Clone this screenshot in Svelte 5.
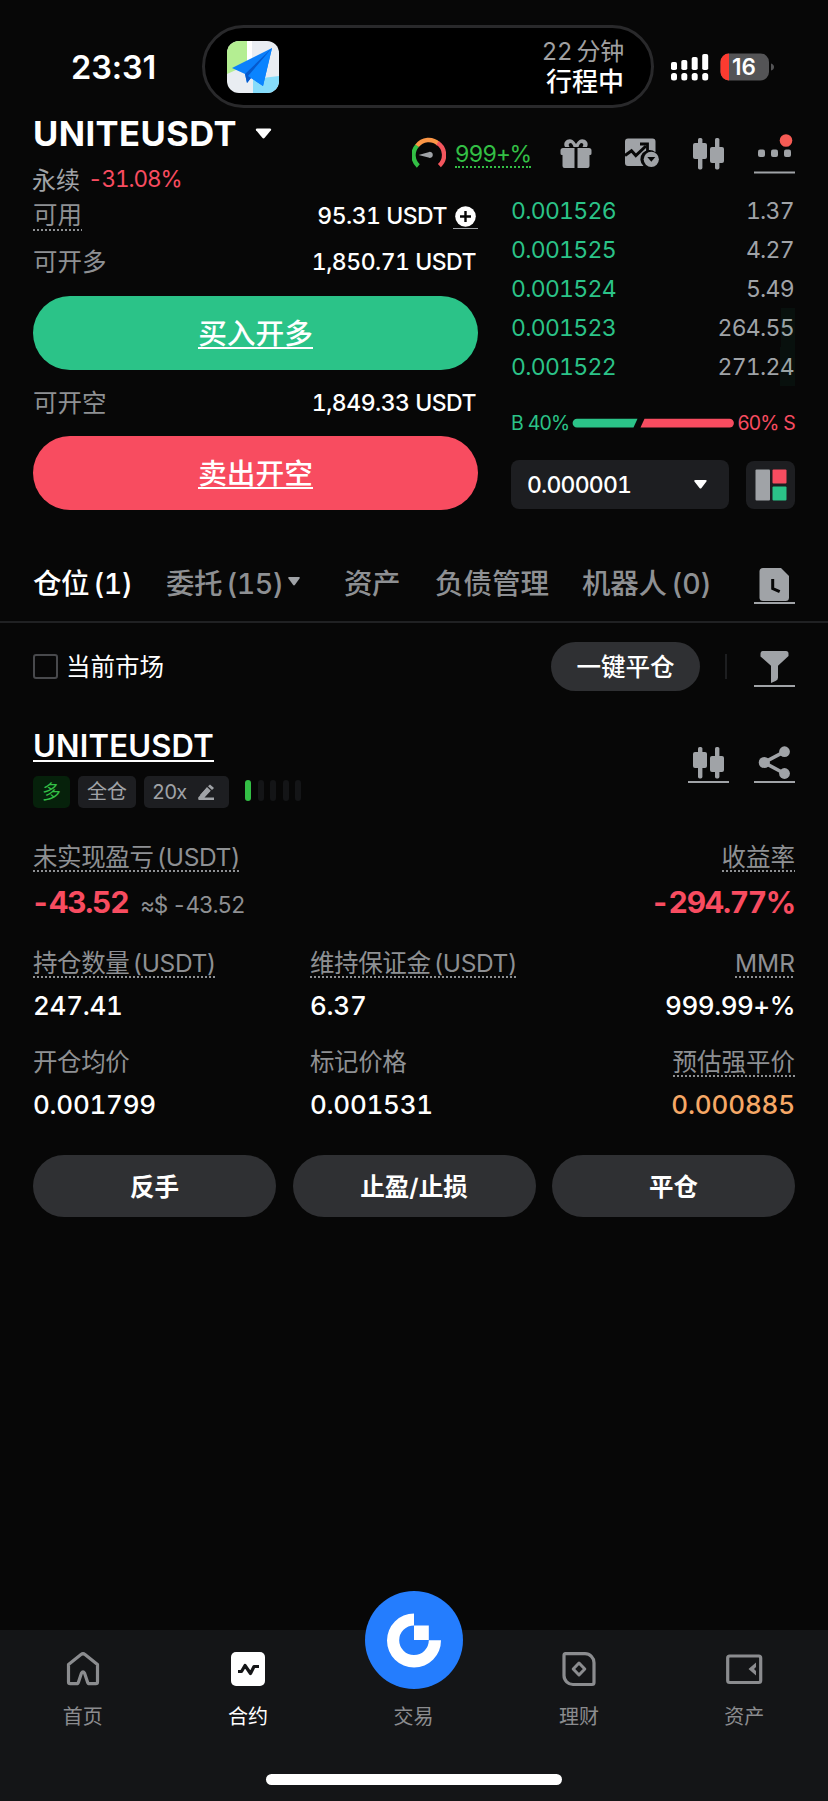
<script>
  const book = [
    { price: '0.001526', size: '1.37', depth: 0 },
    { price: '0.001525', size: '4.27', depth: 0 },
    { price: '0.001524', size: '5.49', depth: 0 },
    { price: '0.001523', size: '264.55', depth: 14 },
    { price: '0.001522', size: '271.24', depth: 15 }
  ];
  const actions = ['反手', '止盈/止损', '平仓'];
</script>

{#snippet candles()}
  <svg class="ico" width="41" height="34" viewBox="0 0 41 34">
    <g fill="#a0a3a7">
      <rect x="5" y="6" width="14" height="16" rx="2" /><rect x="10" y="1" width="4.4" height="31.4" rx="1.6" />
      <rect x="22" y="10" width="14" height="16" rx="2" /><rect x="27" y="1" width="4.4" height="31.4" rx="1.6" />
    </g>
  </svg>
{/snippet}

<div class="screen">
  <div class="status">
    <div class="time">23:31</div>
    <div class="island">
      <svg width="52" height="52" viewBox="0 0 52 52">
        <defs><clipPath id="tile"><rect width="52" height="52" rx="12" /></clipPath></defs>
        <g clip-path="url(#tile)">
          <rect width="52" height="52" fill="#e9edf2" />
          <path d="M0 0h20v24L0 33z" fill="#b4ee92" />
          <path d="M20 0h5v24h-5z" fill="#fff" />
          <path d="M26 38l26-3v17H26z" fill="#86dcfa" />
          <path d="M45 7L5 27l13 6 2 9 4-5 12 8z" fill="#0b80fb" />
          <path d="M45 7L18 33l2 9 4-5z" fill="#0659cc" />
          <path d="M45 7L21 35l15 10z" fill="#0a84ff" />
        </g>
      </svg>
      <div class="trip"><span>22<i></i>分钟</span><b>行程中</b></div>
    </div>
    <svg class="signal" width="104" height="30" viewBox="0 0 104 30">
      <g fill="#fff">
        <rect x="0" y="10" width="6" height="8" rx="1.8" /><rect x="10.3" y="8" width="6" height="10" rx="1.8" />
        <rect x="20.7" y="5" width="6" height="13" rx="1.8" /><rect x="31.2" y="2" width="6" height="16" rx="1.8" />
        <rect x="0" y="21" width="6" height="7.5" rx="2.5" /><rect x="10.3" y="21" width="6" height="7.5" rx="2.5" />
        <rect x="20.7" y="21" width="6" height="7.5" rx="2.5" /><rect x="31.2" y="21" width="6" height="7.5" rx="2.5" />
      </g>
      <clipPath id="bat"><rect x="49.5" y="1.5" width="48.5" height="27" rx="8.5" /></clipPath>
      <g clip-path="url(#bat)"><rect x="49" y="1" width="50" height="28" fill="#545456" /><rect x="49" y="1" width="9" height="28" fill="#fc3b30" /></g>
      <path d="M100 11.5q3 1 3 3.5t-3 3.5z" fill="#545456" />
      <text x="73" y="23" class="pct" text-anchor="middle">16</text>
    </svg>
  </div>

  <header>
    <div class="pair">
      <div class="name">UNITEUSDT<svg width="17" height="11" viewBox="0 0 17 11"><path d="M2 .5h13q2 .3.9 1.7L9.7 9.8q-1.2 1.2-2.4 0L1.1 2.2Q0 .8 2 .5z" fill="#fff" /></svg></div>
      <div class="sub"><span>永续</span><em>-31.08%</em></div>
    </div>
    <div class="tools">
      <svg width="34" height="32" viewBox="0 0 34 32">
        <g fill="none" stroke-width="4.4">
          <path d="M6.3 29A14.4 14.4 0 0 1 5.3 8.5" stroke="#33bf45" />
          <path d="M5.1 8.8A14.4 14.4 0 0 1 26.5 6.9" stroke="#fb9646" />
          <path d="M25.5 5.9A14.4 14.4 0 0 1 27.4 28.6" stroke="#f4565d" />
        </g>
        <path d="M6.5 17.9l10-2.7a3 3 0 1 1 0 5.4z" fill="#a0a3a7" />
      </svg>
      <span class="risk">999+%</span>
      <svg class="gift" width="32" height="32" viewBox="0 0 32 32">
        <path d="M3 11h11.5v20H4.5a2 2 0 0 1-2-2V18H2a1.5 1.5 0 0 1-1.5-1.5v-3A2.5 2.5 0 0 1 3 11zM17.5 11H29a2.5 2.5 0 0 1 2.5 2.5v3A1.5 1.5 0 0 1 30 18h-.5v11a2 2 0 0 1-2 2h-10z" fill="#a0a3a7" />
        <path d="M5 10C2 4 9 .5 12.5 3q2 1.5 3.5 4 1.5-2.5 3.5-4C23 .5 30 4 27 10h-4.5q2-3.5-1-4-2 .3-3 4h-5q-1-3.7-3-4-3 .5-1 4z" fill="#a0a3a7" />
      </svg>
      <svg class="chart" width="36" height="32" viewBox="0 0 36 32">
        <path d="M4 1.5h24.5a3 3 0 0 1 3 3v10.7a9 9 0 0 0-12 13.8H4a3 3 0 0 1-3-3V4.5a3 3 0 0 1 3-3z" fill="#a0a3a7" />
        <path d="M1 18.500l6.500-4.700 4.300 4.800L22 9" fill="none" stroke="#070707" stroke-width="3" />
        <path d="M16 7h7.500v7" fill="none" stroke="#070707" stroke-width="2.8" />
        <circle cx="27.3" cy="22.3" r="7.6" fill="#a0a3a7" /><path d="M23.3 20h8l-4 4.8z" fill="#070707" />
      </svg>
      {@render candles()}
      <svg class="more" width="41" height="42" viewBox="0 0 41 42">
        <g fill="#a0a3a7"><rect x="4" y="17.5" width="7" height="7.5" rx="2" /><rect x="17" y="17.5" width="7" height="7.5" rx="2" /><rect x="30" y="17.5" width="7" height="7.5" rx="2" /><rect y="39.5" width="41" height="2" /></g>
        <circle cx="32" cy="8.5" r="6.3" fill="#f65b54" />
      </svg>
    </div>
  </header>

  <section class="trade">
    <div class="order">
      <div class="line r1"><span><u class="dot">可用</u></span><b>95.31 USDT<svg width="25" height="24" viewBox="0 0 25 24"><circle cx="12.5" cy="11.5" r="10.3" fill="#fff" /><path d="M7 11.5h11M12.5 6v11" stroke="#070707" stroke-width="2.4" /><path d="M0 23.5h25" stroke="#a0a3a7" stroke-width="1" /></svg></b></div>
      <div class="line r2"><span>可开多</span><b>1,850.71 USDT</b></div>
      <button class="buy"><span>买入开多</span></button>
      <div class="line r3"><span>可开空</span><b>1,849.33 USDT</b></div>
      <button class="sell"><span>卖出开空</span></button>
    </div>
    <div class="book">
      {#each book as row}
        <div class="row"><span class="green">{row.price}</span><span class="size">{row.size}</span><i style="width:{row.depth}px"></i></div>
      {/each}
      <div class="ratio">
        <span class="green">B 40%</span>
        <svg width="162" height="10" viewBox="0 0 162 10"><path d="M5 .7h60.5l-4 8.8H5A4.4 4.4 0 0 1 5 .7z" fill="#2bc388" /><path d="M72.5 .7h85a4.4 4.4 0 0 1 0 8.8h-89z" fill="#f84c60" /></svg>
        <span class="red">60% S</span>
      </div>
      <div class="pick">
        <div class="select"><span>0.000001</span><svg width="13" height="9" viewBox="0 0 13 9"><path d="M1.5 0h10q2 .2.7 1.7L7.5 8q-1 1-2 0L.6 1.7Q-.5.2 1.5 0z" fill="#fff" /></svg></div>
        <div class="layout"><svg width="32" height="32" viewBox="0 0 32 32"><rect x=".5" y=".5" width="14.5" height="31" rx="1" fill="#a0a3a7" /><rect x="17.5" y=".5" width="14" height="14" rx="1" fill="#f84c60" /><rect x="17.5" y="17.5" width="14" height="14" rx="1" fill="#2bc388" /></svg></div>
      </div>
    </div>
  </section>

  <nav class="tabs">
    <span class="on t1">仓位 (1)</span>
    <span class="t2">委托 (15)<svg width="12" height="9" viewBox="0 0 12 9"><path d="M1 0h10q1.3.3.5 1.5L7 7.8q-1 1.2-2 0L.5 1.5Q-.3.3 1 0z" fill="#a0a3a7" /></svg></span>
    <span class="t3">资产</span>
    <span class="t4">负债管理</span>
    <span class="t5">机器人 (0)</span>
    <svg class="ico" width="41" height="38" viewBox="0 0 41 38"><path d="M9 2h18l8 8v21.5a3.5 3.5 0 0 1-3.5 3.5H9a3.5 3.5 0 0 1-3.5-3.5v-26A3.5 3.5 0 0 1 9 2z" fill="#a0a3a7" /><path d="M18.7 13v9.5l7 3.2" fill="none" stroke="#070707" stroke-width="3" /><path d="M0 37h41" stroke="#a0a3a7" stroke-width="2" /></svg>
  </nav>

  <div class="filter">
    <i class="check"></i><span class="only">当前市场</span>
    <button>一键平仓</button><i class="sep"></i>
    <svg width="41" height="38" viewBox="0 0 41 38"><path d="M8.5 2h23.5q2.5 0 2.5 2.5v2.5L24 16.8v12q0 2.2-2.5 3.3L17 34V16.800L6.5 7.5v-3Q6.5 2 8.500 2z" fill="#a0a3a7" /><path d="M0 37h41" stroke="#a0a3a7" stroke-width="2" /></svg>
  </div>

  <section class="position">
    <div class="phead">
      <div>
        <div class="pname"><span>UNITEUSDT</span></div>
        <div class="chips">
          <span class="long">多</span><span class="cross">全仓</span>
          <span class="lev">20x<svg width="17" height="16" viewBox="0 0 17 16"><path d="M2 11.5L9 3.3l3.6 3.4L6.5 13.5H16V16H1.2q-1 0-1-1v-1.5z" fill="#a0a3a7" /><path d="M2 11L9 3.3l3.6 3.4L5 14.5z" fill="#a0a3a7" /><path d="M10 2.3L12 .4l4 3.7-2 2z" fill="#a0a3a7" /></svg></span>
          <div class="bars"><i class="lit"></i><i></i><i></i><i></i><i></i></div>
        </div>
      </div>
      <div class="links">
        <div class="ul">{@render candles()}</div>
        <div class="ul"><svg class="ico" width="41" height="34" viewBox="0 0 41 34"><path d="M30.5 5.7L10 16.5l20.5 11" fill="none" stroke="#a0a3a7" stroke-width="3.6" /><g fill="#a0a3a7"><circle cx="30.5" cy="5.7" r="5.4" /><circle cx="10.3" cy="16.5" r="5.6" /><circle cx="30.5" cy="27.5" r="5.4" /></g></svg></div>
      </div>
    </div>

    <div class="pnl">
      <div><label class="dot">未实现盈亏 (USDT)</label><p><b class="l">-43.52</b><small>≈$ -43.52</small></p></div>
      <div class="end"><label class="dot">收益率</label><p><b>-294.77%</b></p></div>
    </div>
    <div class="stats s1">
      <div><label class="dot">持仓数量 (USDT)</label><p>247.41</p></div>
      <div><label class="dot">维持保证金 (USDT)</label><p>6.37</p></div>
      <div class="end"><label class="dot">MMR</label><p class="mmr">999.99+%</p></div>
    </div>
    <div class="stats">
      <div><label>开仓均价</label><p>0.001799</p></div>
      <div><label>标记价格</label><p>0.001531</p></div>
      <div class="end"><label class="dot">预估强平价</label><p class="warn">0.000885</p></div>
    </div>
    <div class="acts">
      {#each actions as a}<button>{a}</button>{/each}
    </div>
  </section>

  <footer>
    <div class="items">
      <div><svg width="36" height="36" viewBox="0 0 36 36"><path d="M3.5 13.5L16 3.5q2-1.500 4 0l12.5 10V31q0 1.7-1.7 1.7h-6.3Q23 32.7 22.5 31L19.5 22q-1.5-2.5-3 0l-3 9q-.5 1.7-2 1.7H5.2Q3.5 32.7 3.5 31z" fill="none" stroke="#8b8c8f" stroke-width="3.2" stroke-linejoin="round" /></svg><span>首页</span></div>
      <div class="cur"><svg width="36" height="36" viewBox="0 0 36 36"><rect x="1" y="1" width="34" height="34" rx="5" fill="#fff" /><path d="M8 20.5h3.5l3.500-6 5.5 8 3.500-7H29" fill="none" stroke="#141517" stroke-width="3.2" stroke-linejoin="round" /></svg><span>合约</span></div>
      <div><svg width="36" height="36"></svg><span>交易</span></div>
      <div><svg width="36" height="36" viewBox="0 0 36 36"><path d="M4.5 2.7h19.5a9 9 0 0 1 9 9V31.5q0 2-2 2H12a9 9 0 0 1-9-9V4.7q0-2 1.5-2z" fill="none" stroke="#8b8c8f" stroke-width="3.2" /><path d="M18 12l5.8 6-5.8 6-5.8-6z" fill="none" stroke="#8b8c8f" stroke-width="3" stroke-linejoin="round" /></svg><span>理财</span></div>
      <div><svg width="38" height="36" viewBox="0 0 38 36"><rect x="2.7" y="5" width="33" height="26.5" rx="2" fill="none" stroke="#8b8c8f" stroke-width="3.2" /><path d="M31 11.5l-7.5 6.5 7.5 6.5v-4.5l-2-2 2-2z" fill="#8b8c8f" /></svg><span>资产</span></div>
    </div>
    <svg class="fab" width="98" height="98" viewBox="0 0 98 98"><circle cx="49" cy="49" r="49" fill="#247dfe" /><path d="M49 22.5a27 27 0 1 0 27 26.8H63.8A14.8 14.8 0 1 1 49 34.5z" fill="#fff" /><rect x="49" y="34.5" width="14.8" height="14.5" fill="#fff" /></svg>
    <div class="home"></div>
  </footer>
</div>

<style>
  :global(body) { background: #070707; }
  .screen { width: 828px; height: 1801px; background: #070707; color: #fff; font-family: Inter, "Noto Sans CJK SC", sans-serif; font-feature-settings: "tnum"; display: flex; flex-direction: column; position: relative; overflow: hidden; white-space: nowrap; }
  .screen :global(svg) { display: block; flex: none; }
  * { box-sizing: border-box; }
  i, em { font-style: normal; }
  p { margin: 0; }
  button { border: 0; padding: 0; color: #fff; font-family: inherit; }

  .status { height: 113px; flex: none; display: flex; align-items: flex-start; padding-left: 71px; }
  .time { width: 131px; font-size: 32.5px; line-height: 40px; font-weight: 600; margin-top: 48px; letter-spacing: -0.1px; font-feature-settings: normal; }
  .island { width: 452px; height: 83px; margin-top: 25px; background: #000; border: 3px solid #29292b; border-radius: 42px; display: flex; justify-content: space-between; padding: 13px 27px 0 22px; }
  .trip { display: flex; flex-direction: column; align-items: flex-end; margin-top: -4px; font-size: 24px; line-height: 30px; color: #a0a0a2; }
  .trip span { letter-spacing: -0.2px; }
  .trip i { display: inline-block; width: 4px; }
  .trip b { color: #fff; font-weight: 500; font-size: 26px; }
  .signal { margin: 52px 0 0 17px; }
  .pct { font: 600 22.5px Inter; fill: #fff; }

  header { height: 82px; flex: none; display: flex; justify-content: space-between; padding: 0 33px; }
  .name { display: flex; align-items: center; height: 41px; gap: 18px; font-size: 34.5px; font-weight: 700; letter-spacing: 0.45px; }
  .sub { display: flex; height: 48px; align-items: center; gap: 8px; margin-left: -1px; font-size: 24px; color: #a0a3a7; }
  .sub em { font-size: 22.5px; color: #f84c60; letter-spacing: -1.1px; }
  .tools { display: flex; padding-top: 24px; height: 62px; }
  .risk { align-self: flex-start; margin: 4px 0 0 9px; height: 27px; line-height: 27px; font-size: 23px; letter-spacing: -1.2px; color: #33bf45; border-bottom: 2px dotted #33bf45; }
  .gift { margin-left: 29px; }
  .chart { margin-left: 32px; }
  .tools .ico { margin-left: 28px; }
  .more { margin: -5px 0 0 25px; }

  .trade { height: 315px; flex: none; display: flex; justify-content: space-between; padding: 0 33px; }
  .order { width: 445px; }
  .line { display: flex; align-items: center; justify-content: space-between; font-size: 24.5px; color: #8e9093; }
  .line > span { margin-top: -1px; }
  .line b { font-weight: 500; font-size: 23px; color: #fff; display: flex; align-items: center; letter-spacing: -0.5px; padding-top: 2px; }
  .r2 b, .r3 b { padding-right: 2px; }
  .line b svg { margin: 1px 0 0 6px; }
  .r1 { height: 40px; } .r2 { height: 52px; } .r3 { height: 64px; }
  .dot { text-decoration: none; background: repeating-linear-gradient(90deg, currentColor 0 2px, transparent 2px 4px) left bottom / 100% 2px no-repeat; }
  .line .dot { display: block; line-height: 30px; padding: 1px 0; }
  .buy, .sell { display: block; width: 445px; height: 74px; border-radius: 37px; font-size: 28.7px; font-weight: 500; }
  .buy { background: #2bc388; margin-top: 9px; }
  .sell { background: #f84c60; margin-top: 2px; }
  .buy span, .sell span { display: inline-block; line-height: 37px; border-bottom: 2.5px solid #fff; height: 34px; }
  .book { width: 284px; margin-top: -4px; }
  .green { color: #2bc388; } .red { color: #f84c60; }
  .row { height: 39px; display: flex; align-items: center; justify-content: space-between; font-size: 23px; letter-spacing: -0.7px; position: relative; }
  .row i { position: absolute; right: 0; top: 0; height: 39px; background: rgba(43, 195, 136, 0.05); }
  .size { color: #a0a3a7; padding-right: 1px; }
  .ratio { height: 74px; display: flex; align-items: center; justify-content: space-between; font-size: 19.5px; letter-spacing: -0.8px; font-feature-settings: normal; }
  .pick { display: flex; justify-content: space-between; align-items: center; }
  .select { width: 218px; height: 49px; border-radius: 8px; background: #1d1e21; display: flex; align-items: center; justify-content: space-between; padding: 0 22px 0 16px; font-size: 23px; font-weight: 500; letter-spacing: -0.8px; }
  .layout { width: 49px; height: 48px; border-radius: 8px; background: #1d1e21; display: grid; place-items: center; }

  .tabs { height: 113px; flex: none; padding: 32px 33px 0; display: flex; align-items: center; border-bottom: 2px solid #202123; font-size: 28.5px; font-weight: 500; color: #8e9093; letter-spacing: -0.5px; word-spacing: -3px; }
  .on { color: #fff; }
  .tabs span { display: flex; align-items: center; flex: none; }
  .t1 { width: 133px; } .t2 { width: 178px; } .t2 svg { margin-left: 5px; } .t3 { width: 91px; } .t4 { width: 147px; letter-spacing: 0; } .t5 { width: 172px; letter-spacing: -0.2px; }
  .tabs .ico { margin-top: 6px; }

  .filter { height: 88px; flex: none; display: flex; align-items: center; padding: 0 33px; font-size: 24.5px; margin-top: -1px; }
  .check { width: 25px; height: 25px; border: 2px solid #48494c; border-radius: 3px; margin-right: 8px; }
  .only { margin-top: -1px; }
  .filter button { margin-left: auto; width: 149px; height: 49px; border-radius: 25px; background: #2f3033; font-size: 24.5px; font-weight: 500; padding-bottom: 1px; }
  .sep { width: 2px; height: 25px; background: #1d1e20; margin: 0 27px 0 25px; }
  .filter svg { margin-top: 3px; }

  .position { padding: 0 33px; flex: none; }
  .phead { height: 113px; display: flex; justify-content: space-between; padding-top: 16px; }
  .pname { height: 50px; font-size: 31px; font-weight: 600; line-height: 40px; letter-spacing: 0.2px; }
  .pname span { display: inline-block; height: 36px; border-bottom: 2px solid #fff; }
  .chips { display: flex; gap: 8px; height: 32px; font-size: 20px; line-height: 33px; color: #a0a3a7; }
  .chips > span { background: #1d1e21; border-radius: 5px; text-align: center; }
  .chips .long { width: 37px; background: #06210b; color: #33bf45; font-size: 19px; }
  .cross { width: 58px; }
  .lev { width: 85px; display: flex; align-items: center; padding-left: 8px; gap: 12px; letter-spacing: -0.8px; }
  .bars { display: flex; gap: 6.5px; padding: 4px 0 0 8px; }
  .bars i { width: 6px; height: 21px; border-radius: 3px; background: #141517; }
  .bars .lit { background: #33bf45; }
  .links { display: flex; gap: 25px; padding-top: 20px; }
  .ul { height: 37px; border-bottom: 2px solid #a0a3a7; }

  label { display: inline-block; height: 30px; line-height: 30px; font-size: 24.5px; color: #8e9093; font-weight: 400; word-spacing: -3px; letter-spacing: -0.4px; }
  .end { text-align: right; }
  .end label { letter-spacing: 0; }
  .pnl { display: flex; justify-content: space-between; height: 105px; padding-top: 19px; }
  .pnl p { height: 60px; line-height: 60px; font-size: 30px; letter-spacing: -1.3px; }
  .pnl b { color: #f84c60; font-weight: 700; }
  .pnl .l { margin-left: -2px; }
  .pnl small { font-size: 22.5px; color: #8e9093; margin-left: 12px; letter-spacing: -1.1px; }
  .stats { display: grid; grid-template-columns: 277px 277px 1fr; width: 762px; height: 99px; padding-top: 19px; font-size: 26px; font-weight: 500; letter-spacing: -0.25px; }
  .stats p { height: 56px; line-height: 56px; }
  .stats .mmr { letter-spacing: -0.5px; }
  .stats .warn { color: #f6a866; letter-spacing: -0.15px; }
  .acts { display: flex; justify-content: space-between; margin-top: 29px; }
  .acts button { width: 243px; height: 62px; border-radius: 31px; background: #2f3033; font-size: 24.5px; font-weight: 600; padding-bottom: 2px; }

  footer { position: relative; margin-top: auto; height: 171px; flex: none; background: #141517; }
  .items { display: grid; grid-template-columns: repeat(5, 1fr); height: 144px; padding: 21px 1px 0 0; font-size: 20px; color: #8b8c8f; }
  .items div { display: flex; flex-direction: column; align-items: center; }
  .items span { margin-top: 15px; line-height: 30px; }
  .items .cur { color: #fff; }
  .fab { position: absolute; left: 365px; top: -39px; }
  .home { width: 296px; height: 11px; border-radius: 6px; background: #fff; margin: 0 auto; }
</style>
